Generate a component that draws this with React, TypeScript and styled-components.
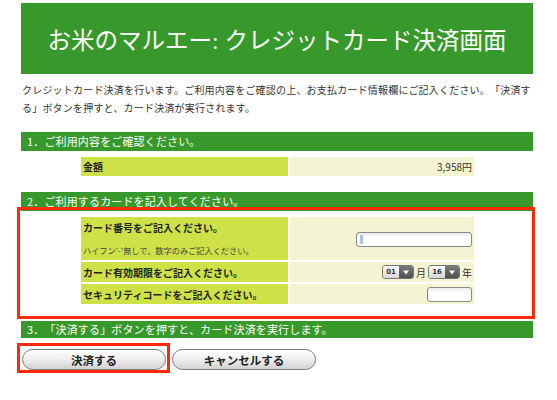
import React from "react";
import styled, { createGlobalStyle } from "styled-components";

const GREEN = "#37992b";
const LIME = "#cee247";
const CREAM = "#f4f4d3";
const RED = "#ff2a0a";
const FONT = `"Noto Sans CJK JP", "Noto Sans", sans-serif`;
const SERIF = `"Liberation Serif", "Noto Sans CJK JP", serif`;

const GlobalStyle = createGlobalStyle`
  html, body { margin: 0; padding: 0; background: #fff; }
  body { font-family: ${FONT}; color: #222; text-spacing-trim: space-all; }
`;

const Page = styled.div`
  position: relative;
  width: 512px;
  padding: 3px 0 24px 21px;
`;

const Header = styled.header`
  height: 71px;
  background: ${GREEN};
  display: flex;
  align-items: center;
  justify-content: center;
`;

const Title = styled.h1`
  margin: 0;
  color: #fff;
  font-family: ${SERIF};
  font-weight: normal;
  font-size: 23.5px;
`;

const Intro = styled.p`
  margin: 7px 0 0 1px;
  max-width: 511px;
  font-size: 10px;
  letter-spacing: 0.2px;
  line-height: 18px;
  color: #333;
`;

const SectionBar = styled.div<{ $mt: number; $h?: number }>`
  margin-top: ${(p) => p.$mt}px;
  height: ${(p) => p.$h ?? 19}px;
  line-height: ${(p) => p.$h ?? 19}px;
  background: ${GREEN};
  color: #fff;
  font-size: 11px;
  letter-spacing: 0.15px;
  padding-left: 6px;
  white-space: nowrap;
  overflow: hidden;
`;

const Table = styled.div`
  display: grid;
  grid-template-columns: 207px 184px;
  column-gap: 2px;
  row-gap: 2px;
  margin: 6px 0 0 60px;
`;

const LabelCell = styled.div<{ $h: number }>`
  height: ${(p) => p.$h}px;
  background: ${LIME};
  padding: 0 2px;
  display: flex;
  flex-direction: column;
  justify-content: center;
  font-size: 10px;
  font-weight: bold;
  color: #222;
`;

const LabelSplit = styled(LabelCell)`
  justify-content: space-between;
  padding-top: 3px;
  padding-bottom: 4px;
  box-sizing: border-box;
`;

const Hint = styled.span`
  font-size: 8.2px;
  font-weight: normal;
  color: #444;
`;

const ValueCell = styled.div<{ $h: number }>`
  height: ${(p) => p.$h}px;
  background: ${CREAM};
  display: flex;
  align-items: center;
  justify-content: flex-end;
  gap: 2px;
  padding-right: 2px;
  font-size: 10px;
  color: #333;
`;

const Field = styled.div<{ $w: number }>`
  position: relative;
  width: ${(p) => p.$w}px;
  height: 15px;
  box-sizing: border-box;
  border: 1px solid #8a8a8a;
  border-radius: 3px;
  background: linear-gradient(#e9e9e9, #fff 30%);
  margin-top: 1px;
`;

const Caret = styled.span`
  position: absolute;
  left: 3px;
  top: 2px;
  width: 3px;
  height: 9px;
  background: #a9c2f2;
`;

const Select = styled.div`
  display: flex;
  width: 32px;
  height: 14px;
  box-sizing: border-box;
  border: 1px solid #777;
  border-radius: 3px;
  overflow: hidden;
`;

const SelectValue = styled.span`
  flex: 1;
  display: flex;
  align-items: center;
  justify-content: center;
  background: linear-gradient(#fdfdfd, #d6d6d6);
  font-family: "DejaVu Sans", sans-serif;
  font-size: 7px;
  font-weight: bold;
  color: #333;
`;

const SelectArrow = styled.span`
  width: 14px;
  display: flex;
  align-items: center;
  justify-content: center;
  background: linear-gradient(#7a7a7a, #4f4f4f);
`;

const Unit = styled.span`
  font-size: 10px;
  color: #333;
`;

const Buttons = styled.div`
  display: flex;
  gap: 6px;
  margin: 11px 0 0 1px;
`;

const Button = styled.button`
  width: 144px;
  height: 21px;
  box-sizing: border-box;
  border: 1px solid #7b7b7b;
  border-radius: 11px;
  background: linear-gradient(#ffffff, #f0f0f0 45%, #d2d2d2);
  font-family: ${FONT};
  font-size: 11.5px;
  font-weight: bold;
  color: #222;
  padding: 0;
  cursor: pointer;
`;

const Mark = styled.div<{ $top: number; $left: number; $w: number; $h: number }>`
  position: absolute;
  top: ${(p) => p.$top}px;
  left: ${(p) => p.$left}px;
  width: ${(p) => p.$w}px;
  height: ${(p) => p.$h}px;
  box-sizing: border-box;
  border: 3px solid ${RED};
  pointer-events: none;
`;

const Arrow = () => (
  <svg width="6" height="5" viewBox="0 0 6 5">
    <path d="M0 0.5 H6 L3 4.5 Z" fill="#fff" />
  </svg>
);

const Dropdown = ({ value }: { value: string }) => (
  <Select>
    <SelectValue>{value}</SelectValue>
    <SelectArrow>
      <Arrow />
    </SelectArrow>
  </Select>
);

export default function App() {
  return (
    <>
      <GlobalStyle />
      <Page>
        <Header>
          <Title>お米のマルエー: クレジットカード決済画面</Title>
        </Header>
        <Intro>
          クレジットカード決済を行います。ご利用内容をご確認の上、お支払カード情報欄にご記入ください。「決済す
          <br />
          る」ボタンを押すと、カード決済が実行されます。
        </Intro>

        <SectionBar $mt={15}>1．ご利用内容をご確認ください。</SectionBar>
        <Table>
          <LabelCell $h={19}>金額</LabelCell>
          <ValueCell $h={19}>3,958円</ValueCell>
        </Table>

        <SectionBar $mt={16}>2．ご利用するカードを記入してください。</SectionBar>
        <Table>
          <LabelSplit $h={43}>
            <span>カード番号をご記入ください。</span>
            <Hint>ハイフン'-'無しで、数字のみご記入ください。</Hint>
          </LabelSplit>
          <ValueCell $h={43}>
            <Field $w={116}>
              <Caret />
            </Field>
          </ValueCell>
          <LabelCell $h={20}>カード有効期限をご記入ください。</LabelCell>
          <ValueCell $h={20}>
            <Dropdown value="01" />
            <Unit>月</Unit>
            <Dropdown value="16" />
            <Unit>年</Unit>
          </ValueCell>
          <LabelCell $h={20}>セキュリティコードをご記入ください。</LabelCell>
          <ValueCell $h={20}>
            <Field $w={45} />
          </ValueCell>
        </Table>

        <SectionBar $mt={17} $h={17}>
          3．「決済する」ボタンを押すと、カード決済を実行します。
        </SectionBar>

        <Buttons>
          <Button type="button">決済する</Button>
          <Button type="button">キャンセルする</Button>
        </Buttons>

        <Mark $top={207} $left={17} $w={518} $h={112} />
        <Mark $top={343} $left={17} $w={153} $h={30} />
      </Page>
    </>
  );
}
